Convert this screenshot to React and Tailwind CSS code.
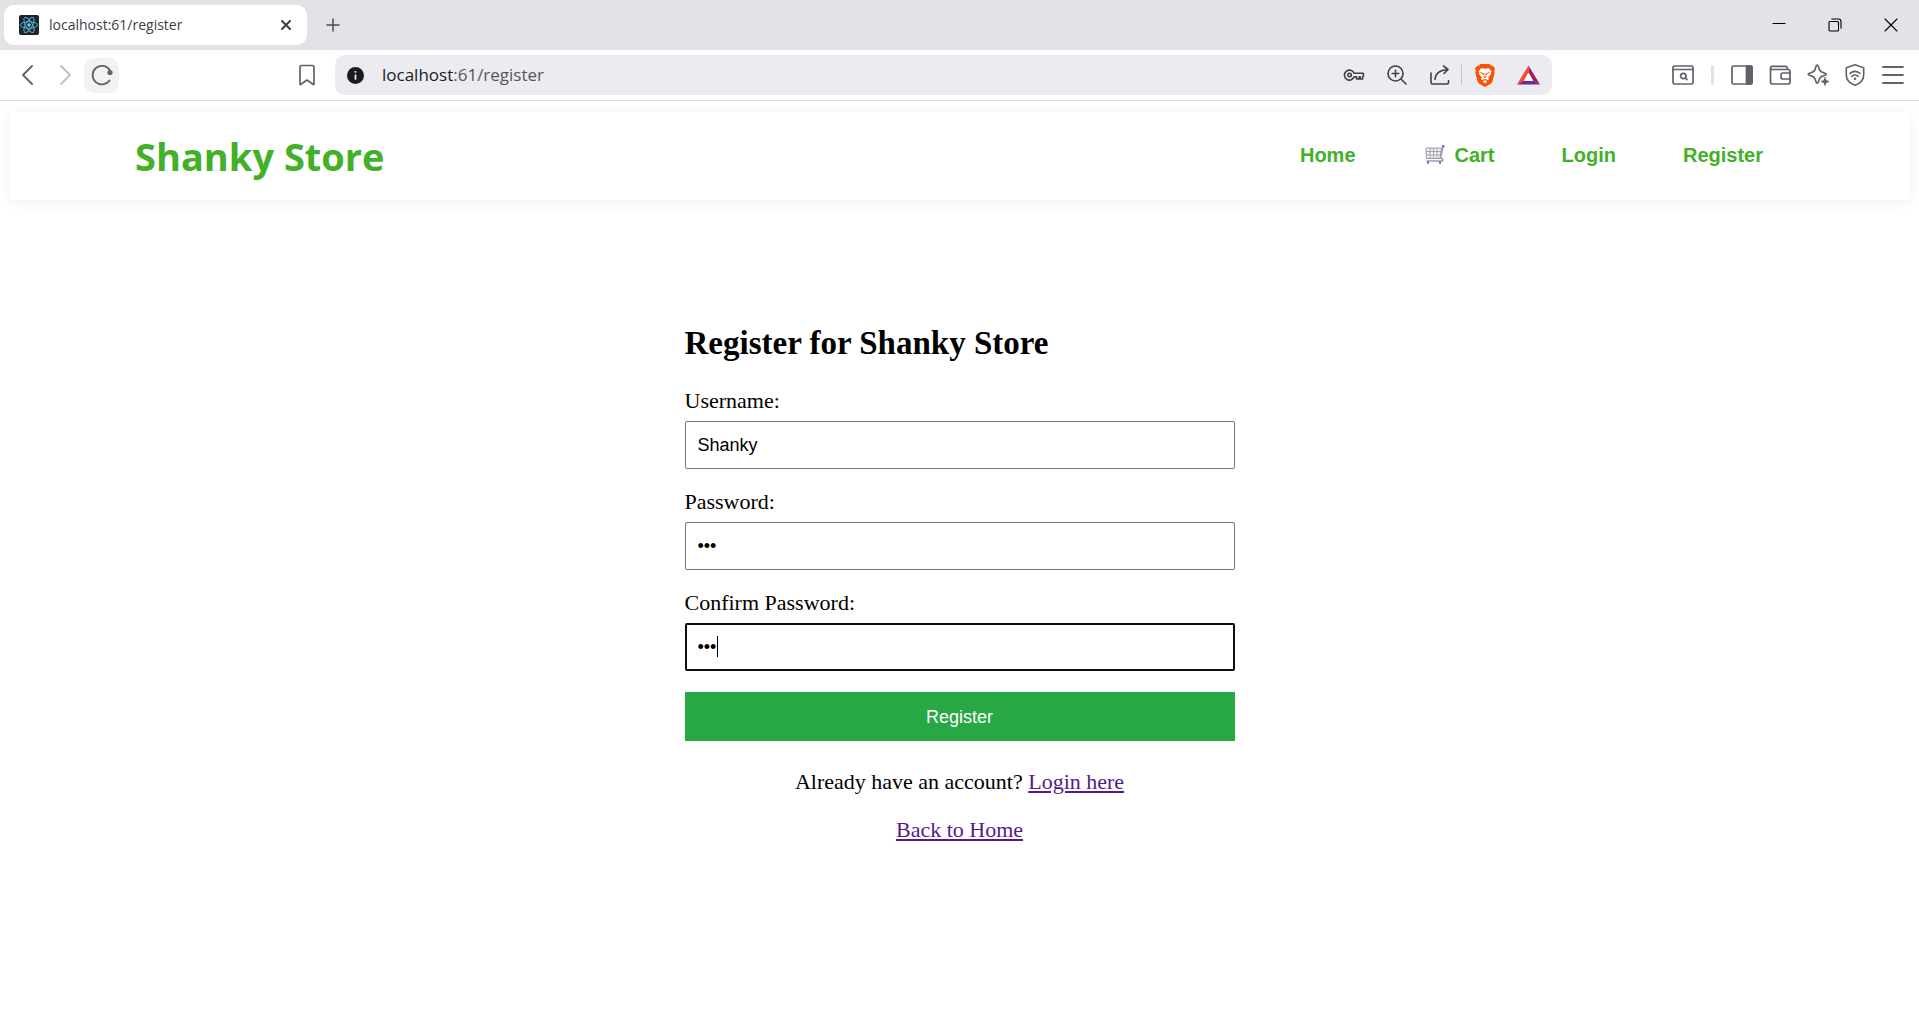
import { useState } from "react";

const stroke = {
  fill: "none",
  stroke: "currentColor",
  strokeWidth: 1.5,
  strokeLinecap: "round",
  strokeLinejoin: "round",
};

function Icon({ size = 24, children, ...rest }) {
  return (
    <svg width={size} height={size} viewBox={`0 0 ${size} ${size}`} aria-hidden="true" {...stroke} {...rest}>
      {children}
    </svg>
  );
}

function ChromeButton({ label, className = "", children }) {
  return (
    <button type="button" aria-label={label} className={`flex shrink-0 items-center justify-center ${className}`}>
      {children}
    </button>
  );
}

function ReactFavicon() {
  return (
    <svg width="20" height="20" viewBox="0 0 20 20" aria-hidden="true">
      <rect width="20" height="20" rx="2" fill="#20232a" />
      <g fill="none" stroke="#4fb3cf" strokeWidth="1">
        <ellipse cx="10" cy="10" rx="8.5" ry="3.3" />
        <ellipse cx="10" cy="10" rx="8.5" ry="3.3" transform="rotate(60 10 10)" />
        <ellipse cx="10" cy="10" rx="8.5" ry="3.3" transform="rotate(120 10 10)" />
      </g>
      <circle cx="10" cy="10" r="1.7" fill="#61dafb" />
    </svg>
  );
}

function TabStrip() {
  return (
    <div className="flex h-[50px] items-center bg-[#e2e2e7] pl-1">
      <div className="flex h-10 w-[303px] items-center rounded-[10px] bg-white pl-[15px] pr-[11px]">
        <ReactFavicon />
        <span className="ml-[10px] flex-1 text-sm text-[#3b3e44]">localhost:61/register</span>
        <ChromeButton label="Close tab" className="h-5 w-5 text-[#3b3e44]">
          <Icon size={12} strokeWidth="2">
            <path d="M2 2l8 8M10 2l-8 8" />
          </Icon>
        </ChromeButton>
      </div>
      <ChromeButton label="New tab" className="ml-[14px] h-6 w-6 text-[#4a4d52]">
        <Icon size={14}>
          <path d="M7 1v12M1 7h12" />
        </Icon>
      </ChromeButton>
      <div className="ml-auto flex text-black">
        <ChromeButton label="Minimize" className="h-[50px] w-14">
          <Icon size={14} strokeWidth="1" strokeLinecap="butt">
            <path d="M.5 5.5h13" />
          </Icon>
        </ChromeButton>
        <ChromeButton label="Restore" className="h-[50px] w-14">
          <Icon size={14} strokeWidth="1.1">
            <rect x="1" y="3.5" width="9.5" height="9.5" rx="1" />
            <path d="M3.8 1h6.7Q13 1 13 3.5v6.7" />
          </Icon>
        </ChromeButton>
        <ChromeButton label="Close" className="h-[50px] w-14">
          <Icon size={14} strokeWidth="1.1">
            <path d="M1 1l12 12M13 1L1 13" />
          </Icon>
        </ChromeButton>
      </div>
    </div>
  );
}

function AddressBar() {
  return (
    <div className="ml-4 flex h-10 flex-1 items-center rounded-[10px] bg-[#ecebf1] pl-3 pr-1 text-[#3f4147]">
      <ChromeButton label="Site information">
        <svg width="17" height="17" viewBox="0 0 16 16" aria-hidden="true">
          <circle cx="8" cy="8" r="8" fill="#1b1b1f" />
          <path d="M8 7v5M8 3.8v1.7" stroke="#ecebf1" strokeWidth="1.6" />
        </svg>
      </ChromeButton>
      <a href="#address" className="ml-[18px] flex-1 text-[17px] text-[#55575e]">
        <span className="text-[#1b1b1f]">localhost</span>:61/register
      </a>
      <div className="flex items-center">
        <ChromeButton label="Saved passwords" className="w-[42px]">
          <Icon size={22} strokeWidth="1.6">
            <path d="M11.1 9.3A5 5 0 1 0 11.1 12.9H13.6V15H16.3V12.9H17.2V15H19.6V12.8L20.4 12.2V9.3Z" />
            <circle cx="6.6" cy="11" r="1.7" />
          </Icon>
        </ChromeButton>
        <ChromeButton label="Zoom" className="w-[43px]">
          <Icon size={22} strokeWidth="1.6">
            <circle cx="9.5" cy="9.5" r="7.5" />
            <path d="M15 15l5 5M9.5 6.2v6.6M6.2 9.5h6.6" />
          </Icon>
        </ChromeButton>
        <ChromeButton label="Share" className="w-[43px]">
          <Icon size={22} strokeWidth="1.6">
            <path d="M2 9v9.5Q2 20 3.5 20H18Q19.5 20 19.5 18.5V16.5" />
            <path d="M6 15.5Q6.5 6.5 18.5 5.5M14.5 2l4.5 3.5-4 4" />
          </Icon>
        </ChromeButton>
        <span className="h-5 w-px bg-[#c4c4ca]" />
        <ChromeButton label="Brave Shields" className="w-[46px]">
          <svg width="20" height="23" viewBox="0 0 20 23" aria-hidden="true">
            <path d="M5.5 0h9l1.8 2 1.6-.3L20 4.5l-.8 2.3.5 1.7-2 8.3q-.5 1.8-2 2.9L10 23l-5.7-3.3q-1.5-1.1-2-2.9L.3 8.500l.5-1.7L0 4.500l2.100-2.800 1.600.3Z" fill="#ff5000" />
            <path d="M6 4.200l4 .6 4-.6 2.600 3.300-.8 1.200.3 1.300-2.900 3.300.9 1.600-1.400 1.300-1.600-1.200L10 15.500l-1.100-.5-1.600 1.200-1.400-1.300.9-1.600L3.900 10l.3-1.300-.8-1.200Z" fill="#fff" />
            <path d="M5.600 8.600l3 .9-.4 1.500M14.400 8.600l-3 .9.4 1.500M10 9.500v3M8.500 12.500L10 13.600l1.500-1.100" stroke="#ff5000" strokeWidth="1" fill="none" />
            <path d="M7.700 17.600l2.300-1.500 2.300 1.500L10 19.400Z" fill="#fff" />
          </svg>
        </ChromeButton>
        <ChromeButton label="Brave Rewards" className="w-10">
          <svg width="23" height="20" viewBox="0 0 24 20" aria-hidden="true">
            <path d="M12 0L0 20l7.200-4L12 7.500Z" fill="#ff4724" />
            <path d="M12 0l12 20-7.200-4L12 7.500Z" fill="#9e1f63" />
            <path d="M0 20h24l-7.200-4H7.200Z" fill="#662d91" />
            <path d="M12 7.500L16.800 16H7.200Z" fill="#fff" />
          </svg>
        </ChromeButton>
      </div>
    </div>
  );
}

function Toolbar() {
  return (
    <div className="flex h-[51px] items-center border-b border-[#dfdfe3] bg-white pl-[9px] pr-2 text-[#5f6368]">
      <ChromeButton label="Back" className="w-[37px]">
        <Icon size={20} strokeWidth="1.8">
          <path d="M14 1L5 10l9 9" />
        </Icon>
      </ChromeButton>
      <ChromeButton label="Forward" className="w-[37px] text-[#bcbec2]">
        <Icon size={20} strokeWidth="1.8">
          <path d="M6 1l9 9-9 9" />
        </Icon>
      </ChromeButton>
      <ChromeButton label="Reload" className="ml-px h-[35px] w-[35px] rounded-[10px] bg-[#f2f2f3]">
        <Icon size={22} strokeWidth="1.8">
          <path d="M19 6.5A9.300 9.300 0 1 0 18.500 16.500" />
          <circle cx="19" cy="8.5" r="2.6" fill="currentColor" stroke="none" />
        </Icon>
      </ChromeButton>
      <ChromeButton label="Bookmark" className="ml-44 w-6">
        <Icon size={22} strokeWidth="1.7">
          <path d="M4 20V3Q4 1.500 5.500 1.500H16.500Q18 1.500 18 3V20Q18 21 17 20.300L11 16 5 20.300Q4 21 4 20Z" />
        </Icon>
      </ChromeButton>
      <AddressBar />
      <div className="ml-[111px] flex items-center">
        <ChromeButton label="Search tabs" className="w-10">
          <Icon size={22} strokeWidth="1.7">
            <rect x="1" y="2" width="20" height="18" rx="1.5" />
            <path d="M1 5.500H21" />
            <circle cx="11.300" cy="12" r="2.700" />
            <path d="M13.500 14.200l1.500 1.500" />
          </Icon>
        </ChromeButton>
        <span className="mx-2 h-5 w-[3px] rounded bg-[#e2e2e6]" />
        <ChromeButton label="Sidebar" className="ml-px w-[38px]">
          <Icon size={22} strokeWidth="1.7">
            <rect x="1" y="2" width="20" height="18" rx="1.5" />
            <path d="M15.500 2H20Q21 2 21 3V19Q21 20 20 20H15.500Z" fill="currentColor" />
          </Icon>
        </ChromeButton>
        <ChromeButton label="Wallet" className="w-[38px]">
          <Icon size={22} strokeWidth="1.7">
            <path d="M1.500 4V18Q1.500 20 3.500 20H19Q21 20 21 18V7.500Q21 5.500 19 5.500H3Q1.500 5.500 1.500 4T3 2.300H16.500Q18.500 2.300 18.500 5.500" />
            <path d="M21 9H14Q12 9 12 11V13Q12 15 14 15H21" />
          </Icon>
        </ChromeButton>
        <ChromeButton label="Leo AI" className="w-[37px]">
          <Icon size={22} strokeWidth="1.7">
            <path d="M10 1Q11 1 11.400 2.500C12.500 7 13.500 8 18 9.200Q20.500 10 18 11.200C13.500 12.400 12.500 13.500 11.400 17.900Q10.200 20.500 9 17.900C8 13.500 7 12.400 2.400 11.200Q0 10 2.400 9.200C7 8 8 7 9 2.500Q9.400 1 10 1Z" />
            <path d="M18 13.500l1.200 2.800 2.800 1.200-2.800 1.200-1.200 2.800-1.200-2.800-2.800-1.200 2.800-1.200Z" fill="currentColor" strokeWidth=".6" />
          </Icon>
        </ChromeButton>
        <ChromeButton label="VPN" className="w-[38px]">
          <Icon size={22} strokeWidth="1.6">
            <path d="M11 .8L19.700 3.700V11Q19.700 18 11 21.300 2.300 18 2.300 11V3.700Z" />
            <path d="M6 9.300Q11 5.500 16 9.300M7.800 12.300Q11 9.800 14.200 12.300" />
            <circle cx="11" cy="14.800" r="1.300" fill="currentColor" stroke="none" />
          </Icon>
        </ChromeButton>
        <ChromeButton label="Menu" className="w-[37px]">
          <Icon size={22} strokeWidth="1.8">
            <path d="M1 3h20M1 11h20M1 19h20" />
          </Icon>
        </ChromeButton>
      </div>
    </div>
  );
}

function CartIcon() {
  return (
    <svg width="20" height="20" viewBox="0 0 20 20" fill="none" aria-hidden="true">
      <path d="M1 3h15.500L15 13.500H1.500Z" fill="#f1eff4" stroke="#9c97a3" />
      <path d="M5 3v10M8.500 3v10.500M12 3v10.500M1 6.500h15M1 10h14.500" stroke="#aaa6b0" />
      <path d="M18 1.500l-2.500 11.500q3 .5 2 3H1.500" stroke="#a49cae" strokeWidth="1.700" />
      <path d="M17 1.200H19.500" stroke="#4879c4" strokeWidth="2" />
      <path d="M2 17.500h2M14 17.500h2" stroke="#4879c4" strokeWidth="2.400" />
    </svg>
  );
}

function StoreHeader() {
  return (
    <header className="m-[10px] mt-[11px] flex h-[88px] items-center justify-between bg-white pl-[125px] pr-[146px] text-[#42b028] shadow-[0_2px_15px_rgba(0,0,0,0.06)]">
      <a href="#home" className="font-['Open_Sans','Noto_Sans',sans-serif] text-[38px] font-bold leading-none">
        Shanky Store
      </a>
      <nav className="flex gap-[67px] pb-[3px] font-['Liberation_Sans',Arial,sans-serif] text-xl font-bold">
        <a href="#home">Home</a>
        <a href="#cart" className="flex items-center gap-[10px] pl-[2px]">
          <CartIcon />
          Cart
        </a>
        <a href="#login">Login</a>
        <a href="#register">Register</a>
      </nav>
    </header>
  );
}

function Field({ id, label, showCaret = false, ...rest }) {
  return (
    <div className="flex flex-col gap-2">
      <label htmlFor={id} className="leading-6">
        {label}
      </label>
      <div className="relative">
        <input
          id={id}
          className="block h-12 w-full rounded-[2px] border border-[#767676] px-3 font-['Liberation_Sans',Arial,sans-serif] text-lg text-black caret-transparent focus:outline-2 focus:-outline-offset-2 focus:outline-[#101010]"
          {...rest}
        />
        {showCaret && <span className="pointer-events-none absolute left-8 top-[13px] h-[21px] w-px bg-black" />}
      </div>
    </div>
  );
}

function RegisterForm() {
  const [values, setValues] = useState({ username: "Shanky", password: "123", confirm: "123" });
  const bind = (name) => ({
    id: name,
    name,
    value: values[name],
    onChange: (event) => setValues({ ...values, [name]: event.target.value }),
  });

  return (
    <main className="mx-auto mt-[123px] w-full max-w-[550px] font-['Liberation_Serif','Times_New_Roman',serif] text-[22px] text-black">
      <h2 className="text-[33px] font-bold leading-10">Register for Shanky Store</h2>
      <form className="mt-[26px] flex flex-col gap-[21px]" onSubmit={(event) => event.preventDefault()}>
        <Field label="Username:" type="text" {...bind("username")} />
        <Field label="Password:" type="password" {...bind("password")} />
        <Field label="Confirm Password:" type="password" autoFocus showCaret {...bind("confirm")} />
        <button type="submit" className="h-[49px] bg-[#28a745] font-['Liberation_Sans',Arial,sans-serif] text-lg text-white">
          Register
        </button>
      </form>
      <p className="mt-7 text-center leading-[26px]">
        Already have an account?{" "}
        <a href="#login" className="text-[#551a8b] underline">Login here</a>
      </p>
      <p className="mt-[22px] text-center leading-[26px]">
        <a href="#home" className="text-[#551a8b] underline">Back to Home</a>
      </p>
    </main>
  );
}

export default function App() {
  return (
    <div className="min-h-screen bg-white">
      <div className="font-['Open_Sans','Noto_Sans',sans-serif]">
        <TabStrip />
        <Toolbar />
      </div>
      <StoreHeader />
      <RegisterForm />
    </div>
  );
}
